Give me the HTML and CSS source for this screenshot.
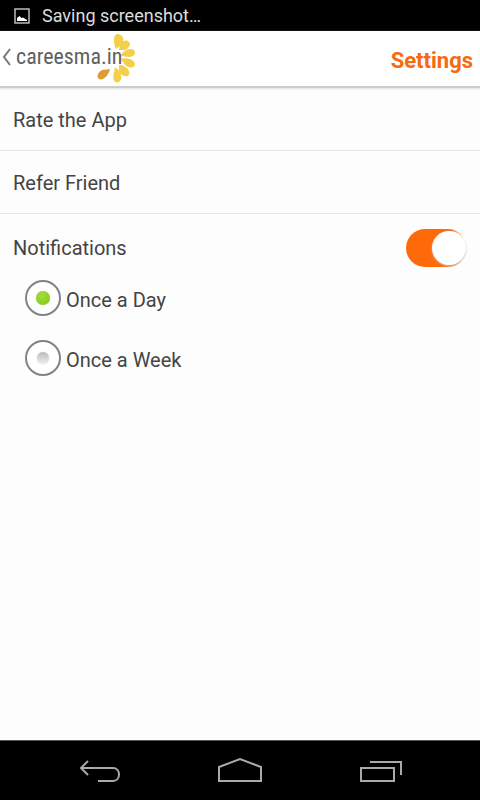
FILE: index.html
```html
<!DOCTYPE html>
<html lang="en">
<head>
<meta charset="utf-8">
<meta name="viewport" content="width=device-width, initial-scale=1">
<title>Settings</title>
<link rel="stylesheet" href="styles.css">
</head>
<body>
<div class="status">
  <svg class="status-icon" width="16" height="16" viewBox="0 0 16 16" aria-hidden="true">
    <rect x="1" y="1" width="14" height="14" fill="none" stroke="#d8d8d8" stroke-width="1.3"/>
    <path d="M3 13V10L5.500 8L7.500 10L9 9.500L13 12V13Z" fill="#fff"/>
  </svg>
  <span>Saving screenshot…</span>
</div>
<header class="bar">
  <a class="brand" href="#">
    <svg class="petals" width="46" height="52" viewBox="92 32 46 52" aria-hidden="true">
      <g fill="#f3d04a">
        <path d="M116 49C113 43 113 35 117 34C123 34 125 40 122 44Z"/>
        <path d="M119 50C119 44 124 39 128 41C132 44 129 48 125 50Z"/>
        <path d="M121 56C122 51 130 47 134 50C137 54 133 57 129 57Z"/>
        <path d="M121 59C126 57 134 59 135 64C135 69 128 68 125 65Z"/>
        <path d="M119 65C124 64 131 70 129 75C126 78 120 75 119 71Z"/>
        <path d="M115 67C120 70 124 79 119 82C114 84 112 78 114 73Z"/>
      </g>
      <path d="M110 69C109 75 103 81 99 79C96 77 98 72 102 70Z" fill="#e29a32"/>
    </svg>
    <svg class="back" width="10" height="18" viewBox="0 0 10 18" aria-hidden="true">
      <path d="M8 1L2 9L8 17" fill="none" stroke="#777" stroke-width="2"/>
    </svg>
    <span class="name">careesma.in</span>
  </a>
  <h1>Settings</h1>
</header>
<main>
  <a class="row" href="#">Rate the App</a>
  <a class="row" href="#">Refer Friend</a>
  <div class="notify">
    <label for="notifications">Notifications</label>
    <input class="switch" type="checkbox" role="switch" id="notifications" checked>
  </div>
  <div class="options" role="radiogroup" aria-label="Notifications">
    <label class="option"><input type="radio" name="frequency" checked><span>Once a Day</span></label>
    <label class="option"><input type="radio" name="frequency"><span>Once a Week</span></label>
  </div>
</main>
<nav class="system">
  <button type="button" aria-label="Back">
    <svg width="46" height="30" viewBox="0 0 46 30"><path d="M12 4L5 11L12 18M5 11H37C45 11 45 24 37 24H22" fill="none" stroke="#aaa" stroke-width="2"/></svg>
  </button>
  <button type="button" aria-label="Home">
    <svg width="46" height="30" viewBox="0 0 46 30"><path d="M2 24V10L23 2L44 10V24Z" fill="none" stroke="#aaa" stroke-width="2"/></svg>
  </button>
  <button type="button" aria-label="Recent apps">
    <svg width="46" height="30" viewBox="0 0 46 30"><path d="M3 11H36V24H3ZM12 5H43V18" fill="none" stroke="#aaa" stroke-width="2"/></svg>
  </button>
</nav>
</body>
</html>
```
FILE: styles.css
```css
* { box-sizing: border-box; }
body {
  margin: 0;
  min-height: 100vh;
  display: flex;
  flex-direction: column;
  background: #fdfdfd;
  color: #444;
  font: 20px/24px Roboto, sans-serif;
}
a { color: inherit; text-decoration: none; }
.status {
  display: flex;
  align-items: center;
  gap: 12px;
  height: 31px;
  padding: 0 14px;
  background: #000;
  color: #ddd;
  font-size: 18px;
}
.bar {
  display: flex;
  align-items: center;
  justify-content: space-between;
  height: 57px;
  padding: 0 7px 0 2px;
  background: #fff;
  border-bottom: 2px solid #ccc;
  box-shadow: 0 1px 2px #ddd;
}
.brand {
  position: relative;
  display: flex;
  align-items: center;
  gap: 4px;
  height: 54px;
  padding-bottom: 3px;
}
.petals { position: absolute; left: 90px; top: 0; }
.back { position: relative; }
.name {
  position: relative;
  color: #606060;
  font: 22px/28px "Roboto Condensed", Roboto, sans-serif;
}
h1 {
  margin: 0;
  padding-top: 4px;
  color: #f86a10;
  font-size: 22px;
  font-weight: 700;
}
main { flex: 1; }
.row {
  display: flex;
  align-items: center;
  height: 63px;
  padding: 2px 13px 0;
  border-bottom: 1px solid #e4e4e4;
}
.notify {
  display: flex;
  align-items: center;
  justify-content: space-between;
  height: 66px;
  padding: 2px 13px 0;
}
.switch {
  appearance: none;
  width: 61px;
  height: 38px;
  margin: 0;
  border-radius: 19px;
  background: #ccc;
}
.switch::before {
  content: "";
  display: block;
  width: 34px;
  height: 34px;
  margin: 2px;
  border-radius: 50%;
  background: #fff;
}
.switch:checked {
  background: linear-gradient(90deg, #ff6a08 60%, #e9762c 75%, #fdfdfd 95%);
}
.switch:checked::before {
  margin-left: 26px;
  box-shadow: 0 1px 2px #d9b9a6;
}
.options {
  display: grid;
  gap: 24px;
  padding: 0 25px;
}
.option {
  display: flex;
  align-items: center;
  gap: 5px;
  height: 36px;
}
.option span { padding-top: 4px; }
.option input {
  appearance: none;
  display: grid;
  place-items: center;
  width: 36px;
  height: 36px;
  margin: 0;
  border: 2px solid #82828a;
  border-radius: 50%;
  background: #fff;
}
.option input::before {
  content: "";
  width: 12px;
  height: 12px;
  border-radius: 50%;
  background: linear-gradient(#bbb, #eee);
  box-shadow: 0 0 1px #aaa;
}
.option input:checked::before {
  width: 14px;
  height: 14px;
  background: radial-gradient(circle at 40% 35%, #a5dc3c, #7cc80e);
}
.system {
  display: flex;
  justify-content: center;
  gap: 95px;
  height: 60px;
  align-items: center;
  padding-top: 2px;
  background: #000;
  border-top: 1px solid #555;
}
.system button {
  display: flex;
  padding: 0;
  border: 0;
  background: none;
}
```
